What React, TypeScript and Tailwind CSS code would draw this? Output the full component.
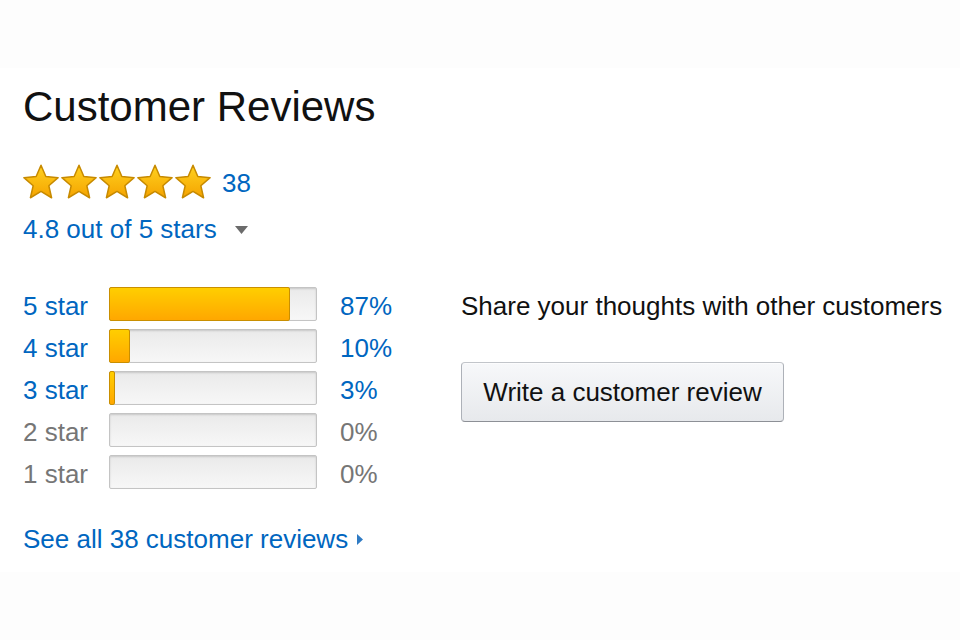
import React from "react";

const ratings = [
  { label: "5 star", pct: 87, active: true },
  { label: "4 star", pct: 10, active: true },
  { label: "3 star", pct: 3, active: true },
  { label: "2 star", pct: 0, active: false },
  { label: "1 star", pct: 0, active: false },
];

const Star: React.FC<{ id: string }> = ({ id }) => (
  <svg width="36" height="35" viewBox="2 2 96 91" className="shrink-0">
    <defs>
      <linearGradient id={id} x1="0" y1="0" x2="0" y2="1">
        <stop offset="0%" stopColor="#ffd21f" />
        <stop offset="100%" stopColor="#f5a300" />
      </linearGradient>
    </defs>
    <polygon
      points="50,4 62.9,34.2 95.6,37.2 70.9,58.8 78.2,90.8 50,74 21.8,90.8 29.1,58.8 4.4,37.2 37.1,34.2"
      fill={`url(#${id})`}
      stroke="#c78a00"
      strokeWidth="4"
      strokeLinejoin="round"
    />
  </svg>
);

const App: React.FC = () => {
  return (
    <div className="w-[960px] h-[640px] bg-[#fdfdfd] pt-[68px] font-['Liberation_Sans',Arial,sans-serif] text-[#111]">
      <section className="bg-white h-[504px] px-[23px] pt-[18px]">
        {/* Title */}
        <h2 className="text-[42px] leading-[42px] font-normal">Customer Reviews</h2>

        {/* Average */}
        <div className="mt-[35px] flex items-center h-[36px]">
          <div className="flex gap-[2px]">
            {[0, 1, 2, 3, 4].map((i) => (
              <Star key={i} id={`star-grad-${i}`} />
            ))}
          </div>
          <a className="ml-[11px] text-[26px] leading-[26px] text-[#0066c0] pt-[3px]">38</a>
        </div>
        <div className="mt-[17px] flex items-center h-[26px]">
          <a className="text-[26px] leading-[26px] text-[#0066c0]">4.8 out of 5 stars</a>
          <svg width="13" height="8" viewBox="0 0 13 8" className="ml-[18px] mt-[1px]">
            <polygon points="0,0 13,0 6.5,8" fill="#6b6b6b" />
          </svg>
        </div>

        {/* Histogram + write review */}
        <div className="mt-[45px] flex">
          <div className="w-[438px] shrink-0 flex flex-col gap-[8px]">
            {ratings.map((r) => (
              <div key={r.label} className="flex items-start h-[34px]">
                <span
                  className={`w-[86px] text-[26px] leading-[38px] ${
                    r.active ? "text-[#0066c0]" : "text-[#767676]"
                  }`}
                >
                  {r.label}
                </span>
                <div className="relative w-[208px] h-[34px] rounded-[2px] border border-[#c4c4c4] bg-gradient-to-b from-[#eaeaea] to-[#f7f7f7] shadow-[inset_0_1px_2px_rgba(0,0,0,0.15)] flex">
                  {r.pct > 0 && (
                    <div
                      className="-my-px -ml-px h-[34px] rounded-[2px] border border-[#c98f00] bg-gradient-to-b from-[#ffce00] to-[#ffa700]"
                      style={{ width: `${(r.pct / 100) * 208}px` }}
                    />
                  )}
                </div>
                <span
                  className={`ml-[23px] text-[26px] leading-[38px] ${
                    r.active ? "text-[#0066c0]" : "text-[#767676]"
                  }`}
                >
                  {r.pct}%
                </span>
              </div>
            ))}
          </div>

          <div className="flex flex-col items-start">
            <p className="text-[26px] leading-[38px] h-[34px] whitespace-nowrap">
              Share your thoughts with other customers
            </p>
            <button className="mt-[41px] w-[323px] h-[60px] rounded-[4px] border border-[#adb1b8] border-t-[#c2c5ca] border-b-[#8d9096] bg-gradient-to-b from-[#f7f8fa] to-[#e7e9ec] text-[26px] text-[#111] shadow-[0_1px_0_rgba(255,255,255,0.6)_inset]">
              Write a customer review
            </button>
          </div>
        </div>

        {/* See all */}
        <div className="mt-[37px] flex items-center h-[26px]">
          <a className="text-[26px] leading-[26px] text-[#0066c0]">See all 38 customer reviews</a>
          <svg width="6" height="11" viewBox="0 0 6 11" className="ml-[9px] mt-[1px]">
            <polygon points="0,0 6,5.5 0,11" fill="#2f7bc4" />
          </svg>
        </div>
      </section>
    </div>
  );
};

export default App;
